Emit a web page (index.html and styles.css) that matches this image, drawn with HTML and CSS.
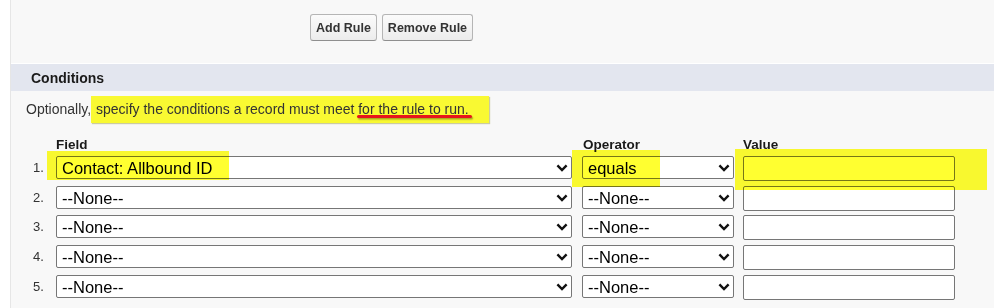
FILE: index.html
```html
<!DOCTYPE html>
<html>
<head>
<meta charset="utf-8">
<link rel="stylesheet" href="styles.css">
</head>
<body>
<div class="panel">
  <div class="btnbar">
    <button class="btn">Add Rule</button>
    <button class="btn">Remove Rule</button>
  </div>
  <div class="section-head">Conditions</div>
  <p class="desc">Optionally, <span class="hl">specify the conditions a record must meet <span class="ul">for the rule to run.</span></span></p>
  <div class="cond">
    <div class="crow head">
      <span class="num"></span>
      <span class="lbl fld">Field</span>
      <span class="lbl op">Operator</span>
      <span class="lbl val">Value</span>
    </div>
    <div class="crow">
      <span class="num">1.</span>
      <div class="sel fld"><select><option>Contact: Allbound ID</option></select><svg class="chev" viewBox="0 0 12 8"><path d="M1.4 1.4 L6 6 L10.6 1.4"/></svg></div>
      <div class="sel op"><select><option>equals</option></select><svg class="chev" viewBox="0 0 12 8"><path d="M1.4 1.4 L6 6 L10.6 1.4"/></svg></div>
      <input class="val" type="text">
    </div>
    <div class="crow short">
      <span class="num">2.</span>
      <div class="sel fld"><select><option>--None--</option></select><svg class="chev" viewBox="0 0 12 8"><path d="M1.4 1.4 L6 6 L10.6 1.4"/></svg></div>
      <div class="sel op"><select><option>--None--</option></select><svg class="chev" viewBox="0 0 12 8"><path d="M1.4 1.4 L6 6 L10.6 1.4"/></svg></div>
      <input class="val" type="text">
    </div>
    <div class="crow">
      <span class="num">3.</span>
      <div class="sel fld"><select><option>--None--</option></select><svg class="chev" viewBox="0 0 12 8"><path d="M1.4 1.4 L6 6 L10.6 1.4"/></svg></div>
      <div class="sel op"><select><option>--None--</option></select><svg class="chev" viewBox="0 0 12 8"><path d="M1.4 1.4 L6 6 L10.6 1.4"/></svg></div>
      <input class="val" type="text">
    </div>
    <div class="crow">
      <span class="num">4.</span>
      <div class="sel fld"><select><option>--None--</option></select><svg class="chev" viewBox="0 0 12 8"><path d="M1.4 1.4 L6 6 L10.6 1.4"/></svg></div>
      <div class="sel op"><select><option>--None--</option></select><svg class="chev" viewBox="0 0 12 8"><path d="M1.4 1.4 L6 6 L10.6 1.4"/></svg></div>
      <input class="val" type="text">
    </div>
    <div class="crow">
      <span class="num">5.</span>
      <div class="sel fld"><select><option>--None--</option></select><svg class="chev" viewBox="0 0 12 8"><path d="M1.4 1.4 L6 6 L10.6 1.4"/></svg></div>
      <div class="sel op"><select><option>--None--</option></select><svg class="chev" viewBox="0 0 12 8"><path d="M1.4 1.4 L6 6 L10.6 1.4"/></svg></div>
      <input class="val" type="text">
    </div>
    <div class="links"><a>Add Row</a> <a>Remove Row</a></div>
    <div class="mark mark-field"></div>
    <div class="mark mark-op"></div>
    <div class="mark mark-val"></div>
  </div>
</div>
</body>
</html>
```
FILE: styles.css
```css
html, body {
  margin: 0;
  padding: 0;
  background: #ffffff;
  height: 308px;
  overflow: hidden;
  font-family: "Liberation Sans", Arial, sans-serif;
  color: #222;
}

.panel {
  margin-left: 10px;
  border-left: 1px solid #e6e6e6;
  background: #f8f8f8;
  height: 308px;
}

.btnbar {
  height: 63px;
  box-sizing: border-box;
  padding: 14px 0 0 299px;
  display: flex;
  gap: 5px;
  align-items: flex-start;
}

.btn {
  font-family: "Liberation Sans", Arial, sans-serif;
  font-weight: bold;
  font-size: 12.5px;
  color: #333;
  height: 27px;
  padding: 0 5px;
  border: 1px solid #b5b5b5;
  border-bottom-color: #8f8f8f;
  border-radius: 3px;
  background: linear-gradient(#fbfbfb, #ececec);
}

.section-head {
  border-top: 1px solid #ffffff;
  height: 28px;
  box-sizing: border-box;
  background: #e3e6ef;
  padding-left: 20px;
  font-weight: bold;
  font-size: 14px;
  line-height: 28px;
  color: #1a1a1a;
}

.desc {
  margin: 0;
  height: 34px;
  box-sizing: border-box;
  padding: 5px 0 0 15px;
  font-size: 14px;
  line-height: 27px;
  color: #333;
}

.hl {
  display: inline-block;
  background: #f9f932;
  padding: 0 20px 0 5px;
  box-shadow: 1px 1px 1px rgba(120, 120, 0, 0.35);
  margin-left: -4px;
}

.ul {
  position: relative;
}

.ul::after {
  content: "";
  position: absolute;
  left: -1px;
  right: -3px;
  top: 14px;
  height: 3px;
  border-radius: 2px;
  background: #e8141b;
  box-shadow: 1px 1.5px 1.5px rgba(60, 60, 0, 0.45);
}

.cond {
  position: relative;
  padding-top: 12px;
}

.crow {
  display: flex;
  align-items: flex-start;
  height: 30px;
}

.crow.short {
  height: 29px;
}

.crow.head {
  height: 19px;
}

.num {
  width: 45px;
  box-sizing: border-box;
  padding: 4px 0 0 22px;
  font-size: 13px;
  color: #333;
  flex: none;
}

.lbl {
  font-weight: bold;
  font-size: 13.5px;
  color: #1a1a1a;
}

.lbl.fld { width: 527px; }
.lbl.op { width: 160px; }

.sel {
  position: relative;
  flex: none;
}

.sel.fld { width: 516px; margin-right: 10px; }
.sel.op { width: 152px; margin-right: 9px; }

.sel select {
  -webkit-appearance: none;
  appearance: none;
  width: 100%;
  height: 23px;
  box-sizing: border-box;
  border: 1px solid #767676;
  border-radius: 2px;
  background: #ffffff;
  font-family: "Liberation Sans", Arial, sans-serif;
  font-size: 16.5px;
  color: #000;
  padding: 0 0 0 5px;
  margin: 0;
}

.chev {
  position: absolute;
  right: 4px;
  top: 8px;
  width: 12px;
  height: 8px;
}

.chev path {
  fill: none;
  stroke: #111;
  stroke-width: 2.4;
}

input.val {
  width: 212px;
  height: 25px;
  box-sizing: border-box;
  border: 1px solid #767676;
  border-radius: 2px;
  background: #fff;
  margin: 0;
  padding: 0;
}

.links {
  padding: 3px 0 0 28px;
  font-size: 12px;
  color: #333;
}

.mark {
  position: absolute;
  background: #ffff30;
  mix-blend-mode: multiply;
}

.mark-field { left: 36px; top: 26px; width: 182px; height: 29px; }
.mark-op { left: 561px; top: 25px; width: 88px; height: 37px; }
.mark-val { left: 724px; top: 24px; width: 252px; height: 41px; }
```
